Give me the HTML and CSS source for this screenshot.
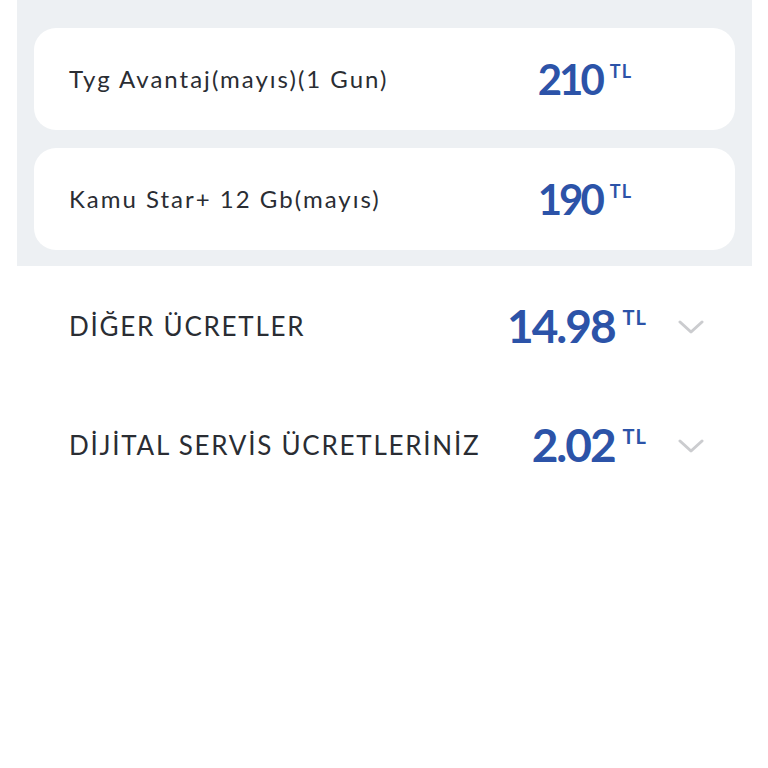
FILE: index.html
```html
<!DOCTYPE html>
<html lang="tr">
<head>
    <meta charset="UTF-8">
    <meta name="viewport" content="width=device-width, initial-scale=1.0">
    <title>Fatura Detayı</title>
    <link rel="stylesheet" href="styles.css">
</head>
<body>

    <div class="packages">
        <div class="card">
            <span class="card-name">Tyg Avantaj(mayıs)(1 Gun)</span>
            <span class="price">
                <span class="price-num">210</span>
                <span class="price-cur">TL</span>
            </span>
        </div>
        <div class="card">
            <span class="card-name">Kamu Star+ 12 Gb(mayıs)</span>
            <span class="price">
                <span class="price-num">190</span>
                <span class="price-cur">TL</span>
            </span>
        </div>
    </div>

    <div class="row">
        <span class="row-name">DİĞER ÜCRETLER</span>
        <span class="price price-big">
            <span class="price-num">14.98</span>
            <span class="price-cur">TL</span>
        </span>
        <svg class="chevron" viewBox="0 0 26 16" width="26" height="16">
            <path d="M2 3 L13 13 L24 3" fill="none" stroke="#cbcccf" stroke-width="3" stroke-linecap="round" stroke-linejoin="round"/>
        </svg>
    </div>

    <div class="row">
        <span class="row-name">DİJİTAL SERVİS ÜCRETLERİNİZ</span>
        <span class="price price-big">
            <span class="price-num">2.02</span>
            <span class="price-cur">TL</span>
        </span>
        <svg class="chevron" viewBox="0 0 26 16" width="26" height="16">
            <path d="M2 3 L13 13 L24 3" fill="none" stroke="#cbcccf" stroke-width="3" stroke-linecap="round" stroke-linejoin="round"/>
        </svg>
    </div>

</body>
</html>
```

FILE: styles.css
```css
body {
    margin: 0;
    background: #fff;
    font-family: Lato, "Noto Sans", sans-serif;
    color: #2a2d33;
}

.packages {
    margin: 0 16px 0 17px;
    padding: 28px 17px 16px 17px;
    background: #edf0f3;
    display: flex;
    flex-direction: column;
    gap: 18px;
}

.card {
    height: 102px;
    background: #fff;
    border-radius: 22px;
    display: flex;
    align-items: center;
    padding: 0 103px 0 35px;
}

.card-name {
    flex: 1;
    font-size: 24px;
    letter-spacing: 2px;
    margin-top: -1px;
}

.price {
    display: flex;
    align-items: flex-start;
    color: #2c53a8;
    font-weight: bold;
    line-height: 1;
}

.price-num {
    font-size: 42px;
    letter-spacing: -3px;
}

.price-cur {
    font-size: 18px;
    margin-left: 8px;
    margin-top: 4px;
    letter-spacing: 1px;
}

.row {
    height: 119px;
    display: flex;
    align-items: center;
    padding: 0 64px 0 69px;
}

.row-name {
    flex: 1;
    font-size: 26px;
    letter-spacing: 1.75px;
}

.price-big .price-num {
    font-size: 46px;
    letter-spacing: -2px;
}

.price-big .price-cur {
    font-size: 20px;
    margin-top: 4px;
}

.chevron {
    margin-left: 31px;
    margin-top: 2px;
}
```
